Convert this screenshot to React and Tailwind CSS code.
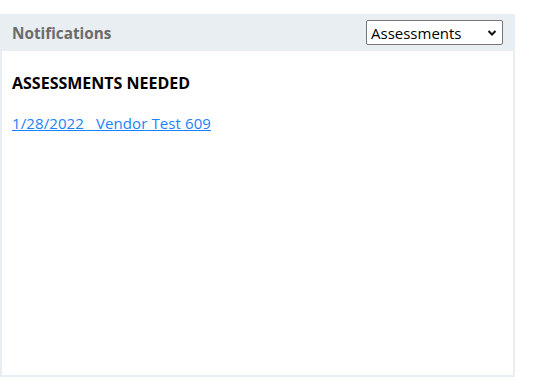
export default function App() {
  return (
    <div className="w-[534px] h-[384px] bg-white pt-[14px]" style={{ fontFamily: '"Open Sans", "Noto Sans", sans-serif' }}>
      <div className="w-[515px] h-[363px] flex flex-col bg-[#e9eef2] px-[2px] pb-[2px]">
        <div className="h-[37px] flex items-center justify-between pl-[10px] pr-[10px] shrink-0">
          <span className="text-[15.3px] font-bold text-[#6b6b6b] leading-[20px]">Notifications</span>
          <div className="relative w-[137px] h-[25px] border border-[#767676] bg-white rounded-[2px] flex items-center pl-[4px]">
            <span className="text-[15px] text-black leading-none mt-[1px]">Assessments</span>
            <svg className="absolute right-[5px] top-[8px]" width="10" height="8" viewBox="0 0 10 8">
              <path d="M1.5 2 L5 5.5 L8.5 2" stroke="#111" strokeWidth="2" fill="none" />
            </svg>
          </div>
        </div>
        <div className="flex-1 bg-white px-[10px] pt-[21px]">
          <div className="text-[16px] font-bold text-black leading-[22px]">ASSESSMENTS NEEDED</div>
          <a href="#" className="block mt-[19px] text-[15px] text-[#1a82ff] underline leading-[20px] whitespace-pre tracking-[0.1px]">{"1/28/2022   Vendor Test 609"}</a>
        </div>
      </div>
    </div>
  );
}
